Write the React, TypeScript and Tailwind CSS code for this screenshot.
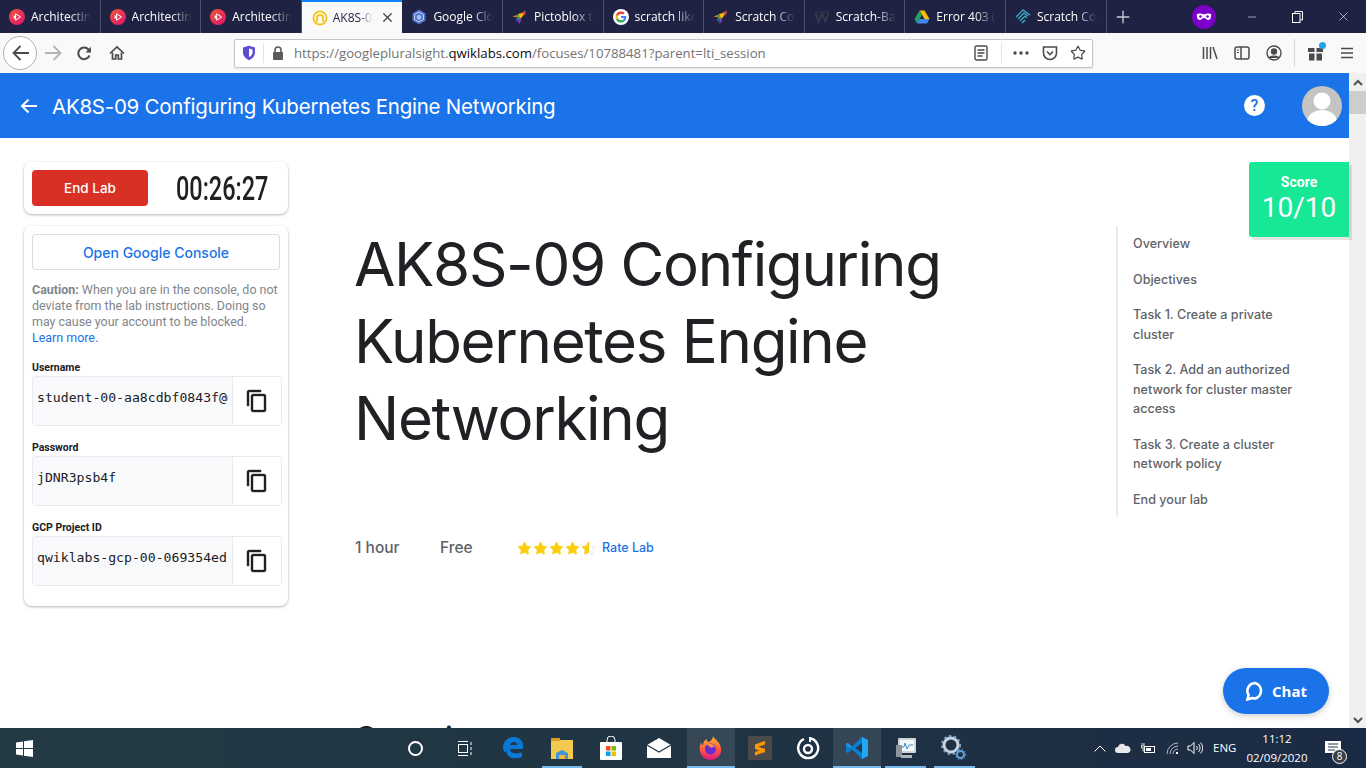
import React from 'react';
import { Star, Plus, X, Minus } from 'lucide-react';

const UI_FONT = 'font-["Open_Sans","Noto_Sans",sans-serif]';
const HEAD_FONT = 'font-["Inter","Noto_Sans",sans-serif]';

const Pluralsight = () => (
  <svg width="16" height="16" viewBox="0 0 16 16">
    <defs>
      <linearGradient id="ps" x1="0" y1="0" x2="1" y2="1">
        <stop offset="0" stopColor="#f0563a" />
        <stop offset="1" stopColor="#e0126e" />
      </linearGradient>
    </defs>
    <circle cx="8" cy="8" r="8" fill="url(#ps)" />
    <path d="M6.600 4.800 11.600 8l-5 3.200z" fill="none" stroke="#fff" strokeWidth="1" />
    <path d="M4.600 6v4L7.400 8z" fill="#fff" />
  </svg>
);

const QwikRing = () => (
  <svg width="16" height="16" viewBox="0 0 16 16" fill="none">
    <circle cx="8" cy="8" r="6.600" stroke="#f5c518" strokeWidth="1.800" />
    <path d="M5 12V8a3 3 0 0 1 6 0v4" stroke="#f5c518" strokeWidth="1.800" />
  </svg>
);

const CloudHex = () => (
  <svg width="16" height="16" viewBox="0 0 16 16">
    <path d="M8 .5 14.600 4.200v7.600L8 15.500 1.400 11.800V4.200z" fill="#4b6fc4" />
    <path d="M8 3 12.400 5.500v5L8 13l-4.400-2.500v-5z" fill="none" stroke="#c6d6f5" strokeWidth="1" />
    <path d="M8 5.500 10.200 7v2.500L8 11 5.800 9.500V7z" fill="#a9c1f0" />
  </svg>
);

const Rocket = () => (
  <svg width="16" height="16" viewBox="0 0 16 16">
    <path d="M10 4 14 1.500 13 6 9 7z" fill="#ea4335" />
    <path d="M10 4 13 1.500 11.500 3 11 6 8 7z" fill="#f28b24" />
    <path d="M6 5 10 4 11 7 8 10z" fill="#fbbc05" />
    <path d="M6 5 8 10 6 10.500 4 7z" fill="#34a853" />
    <path d="M0.500 8 4 6 6 8z" fill="#e8792b" />
    <path d="M6 10.500 9.500 9 8.500 13 6.500 15z" fill="#7b3fb5" />
    <path d="M4 9 6 11 4.500 13z" fill="#3f6fd8" />
  </svg>
);

const GoogleG = () => (
  <svg width="16" height="16" viewBox="0 0 16 16">
    <circle cx="8" cy="8" r="8" fill="#fff" />
    <path d="M13.300 8.100c0-.4 0-.8-.1-1.100H8v2.100h3a2.600 2.600 0 0 1-1.100 1.700l1.800 1.400c1-1 1.600-2.400 1.600-4.100z" fill="#4285f4" />
    <path d="M8 13.500c1.500 0 2.700-.5 3.700-1.300l-1.800-1.400c-.5.3-1.100.5-1.900.5-1.400 0-2.700-1-3.100-2.300L3 10.400a5.500 5.500 0 0 0 5 3.100z" fill="#34a853" />
    <path d="M4.900 9A3.300 3.300 0 0 1 4.900 7L3 5.600a5.500 5.500 0 0 0 0 4.800z" fill="#fbbc05" />
    <path d="M8 4.700c.8 0 1.500.3 2.100.8l1.600-1.600A5.500 5.500 0 0 0 3 5.600L4.900 7C5.300 5.700 6.600 4.700 8 4.700z" fill="#ea4335" />
  </svg>
);

const WMark = () => (
  <svg width="16" height="16" viewBox="0 0 16 16" fill="none" stroke="#3a3d4d" strokeWidth="1.600">
    <path d="M1.500 3.500 4.500 12.500 8 5l3.500 7.500 3-9" />
    <path d="M1 3h14" stroke="#2e3145" />
  </svg>
);

const Drive = () => (
  <svg width="16" height="16" viewBox="0 0 16 16">
    <path d="M5.500 1.500h5L15.500 10h-5z" fill="#fbbc05" />
    <path d="M5.500 1.500 .5 10 3 14.500 8 6z" fill="#1ea362" />
    <path d="M3 14.500h10L15.500 10h-10z" fill="#4285f4" />
  </svg>
);

const WaveMark = () => (
  <svg width="16" height="16" viewBox="0 0 16 16" fill="none" stroke="#3fb6d3" strokeWidth="1.200">
    <path d="M1 8 8 1l7 5" />
    <path d="M3 10l6-6 4 3" />
    <path d="M5 12l5-5 2 2" />
    <path d="M7 14l3-3" />
  </svg>
);

const tabs: { title: string; icon: React.ReactNode; active?: boolean }[] = [
  { title: 'Architecting with', icon: <Pluralsight /> },
  { title: 'Architecting with', icon: <Pluralsight /> },
  { title: 'Architecting with', icon: <Pluralsight /> },
  { title: 'AK8S-09 Conf', icon: <QwikRing />, active: true },
  { title: 'Google Cloud', icon: <CloudHex /> },
  { title: 'Pictoblox tutorial', icon: <Rocket /> },
  { title: 'scratch like pr', icon: <GoogleG /> },
  { title: 'Scratch Coding', icon: <Rocket /> },
  { title: 'Scratch-Based', icon: <WMark /> },
  { title: 'Error 403 (Forb', icon: <Drive /> },
  { title: 'Scratch Coding', icon: <WaveMark /> },
];

const TabBar = () => (
  <div className="flex h-[33px] shrink-0 items-stretch bg-[#1f2243]">
    {tabs.map((t, i) =>
      t.active ? (
        <div key={i} className="flex w-[100.600px] shrink-0 items-center gap-[5px] border-t-2 border-[#0a84ff] bg-[#f9f9fa] pl-[10px] text-[#1f2243]">
          <span className="shrink-0"><QwikRing /></span>
          <span className="w-[44px] overflow-hidden whitespace-nowrap text-[12px] [mask-image:linear-gradient(to_right,black_60%,transparent_90%)]">{t.title}</span>
          <X size={15} strokeWidth={2} className="-ml-[2px] shrink-0 text-[#444]" />
        </div>
      ) : (
        <div key={i} className="flex w-[100.600px] shrink-0 items-center gap-[6px] border-r border-[#4e5170] pl-[9px] pt-[1px] text-white">
          <span className="shrink-0">{t.icon}</span>
          <span className="w-[60px] overflow-hidden whitespace-nowrap text-[12px] [mask-image:linear-gradient(to_right,black_65%,transparent)]">{t.title}</span>
        </div>
      ),
    )}
    <div className="flex w-[34px] items-center justify-center text-[#c9cad3]">
      <Plus size={20} strokeWidth={1.600} />
    </div>
    <div className="ml-[47px] flex w-[34px] items-center justify-center">
      <svg width="24" height="24" viewBox="0 0 24 24">
        <circle cx="12" cy="12" r="12" fill="#7b00c8" />
        <path d="M5 9c2-1 4-.5 7 .5 3-1 5-1.500 7-.5 .5 3-.5 6-2.500 6-2 0-2.500-2-4.500-2s-2.500 2-4.500 2C5.500 15 4.500 12 5 9z" fill="#fff" />
        <circle cx="8.500" cy="11.500" r="1.300" fill="#7b00c8" />
        <circle cx="15.500" cy="11.500" r="1.300" fill="#7b00c8" />
      </svg>
    </div>
    <div className="ml-[8px] flex w-[46px] items-center justify-center text-white"><Minus size={12} strokeWidth={1.200} /></div>
    <div className="flex w-[46px] items-center justify-center text-white">
      <svg width="11" height="12" viewBox="0 0 11 12" fill="none" stroke="#fff">
        <rect x="0.500" y="2.500" width="7.500" height="9" />
        <path d="M3 2.500V.5h7.500v8.500H8" />
      </svg>
    </div>
    <div className="flex w-[46px] items-center justify-center text-white"><X size={15} strokeWidth={1} /></div>
  </div>
);

const NavBar = () => (
  <div className="flex h-10 shrink-0 items-center bg-[#f9f9fa] text-[#4a4a4f]">
    <div className="ml-[3px] flex h-[34px] w-[34px] items-center justify-center rounded-full border border-[#b1b1b3] bg-white">
      <svg width="17" height="16" viewBox="0 0 17 16" fill="none" stroke="#4a4a4f" strokeWidth="1.800">
        <path d="M17 8H1.500M8.500 1 1.500 8l7 7" />
      </svg>
    </div>
    <svg width="17" height="16" viewBox="0 0 17 16" fill="none" stroke="#b4b4b6" strokeWidth="1.800" className="ml-[8px]">
      <path d="M0 8h15.500M8.500 1l7 7-7 7" />
    </svg>
    <svg width="15" height="15" viewBox="0 0 15 15" fill="none" stroke="#4a4a4f" strokeWidth="2" className="ml-[15px]">
      <path d="M12.500 9.500A5.800 5.800 0 1 1 11.500 3.500L13 5" />
      <path d="M14 .8V6.500H8.500z" fill="#4a4a4f" stroke="none" />
    </svg>
    <svg width="16" height="16" viewBox="0 0 16 16" className="ml-[17px]" fill="none" stroke="#4a4a4f" strokeWidth="1.700">
      <path d="M1 8.500 8 2l7 6.500" />
      <path d="M3.500 7.500V14h3.200v-4h2.600v4h3.200V7.500" />
    </svg>
    <div className="ml-[109px] flex h-[29px] w-[859px] items-center rounded-[2px] border border-[#c4c4c6] bg-white shadow-[0_1px_2px_rgba(0,0,0,0.08)]">
      <svg width="14" height="16" viewBox="0 0 14 16" className="ml-[7px]">
        <path d="M7 .8 13 2.500v5c0 3.500-2.500 6-6 7.700C3.500 13.500 1 11 1 7.500v-5z" fill="#5a4fcf" />
        <path d="M7 3.500 10.500 4.500v3c0 2-1.500 3.500-3.500 4.700z" fill="#fff" />
      </svg>
      <div className="ml-[7px] h-[20px] w-px bg-[#e3e3e5]" />
      <svg width="12" height="14" viewBox="0 0 12 14" className="ml-[8px]">
        <path d="M3 6V4a3 3 0 0 1 6 0v2" fill="none" stroke="#5c5c5f" strokeWidth="1.600" />
        <rect x="1" y="6" width="10" height="8" rx="1" fill="#5c5c5f" />
      </svg>
      <span className={`ml-[10px] whitespace-nowrap pt-[1px] text-[13.200px] text-[#737373] ${UI_FONT}`}>
        https://googlepluralsight.<span className="text-[#0c0c0d]">qwiklabs.com</span>/focuses/10788481?parent=lti_session
      </span>
      <div className="flex-1" />
      <svg width="14" height="16" viewBox="0 0 14 16" fill="none" stroke="#4a4a4f" strokeWidth="1.400">
        <rect x="1" y="1" width="12" height="14" rx="1.500" />
        <path d="M3.500 5h7M3.500 8h7M3.500 11h5" />
      </svg>
      <div className="ml-[13px] h-[20px] w-px bg-[#e3e3e5]" />
      <svg width="16" height="4" viewBox="0 0 16 4" fill="#4a4a4f" className="ml-[11px]">
        <circle cx="2" cy="2" r="1.700" />
        <circle cx="8" cy="2" r="1.700" />
        <circle cx="14" cy="2" r="1.700" />
      </svg>
      <svg width="16" height="16" viewBox="0 0 16 16" fill="none" stroke="#4a4a4f" strokeWidth="1.600" className="ml-[13px]">
        <path d="M1.500 2h13v6a6.500 6.500 0 0 1-13 0z" />
        <path d="M5 6.500 8 9.500l3-3" />
      </svg>
      <Star size={16} strokeWidth={1.800} className="ml-[12px] mr-[6px]" />
    </div>
    <svg width="16" height="16" viewBox="0 0 16 16" className="ml-[109px]" fill="none" stroke="#4a4a4f" strokeWidth="1.500">
      <path d="M1.500 2v12M5 2v12M8.500 2v12M11 2l4 12" />
    </svg>
    <svg width="16" height="14" viewBox="0 0 16 14" className="ml-[16px]" fill="none" stroke="#4a4a4f" strokeWidth="1.500">
      <rect x="1" y="1" width="14" height="12" rx="2" />
      <path d="M7 1v12" />
      <path d="M3 4h2M3 6.500h2" strokeWidth="1" />
    </svg>
    <svg width="16" height="16" viewBox="0 0 16 16" className="ml-[16px]" fill="none" stroke="#4a4a4f" strokeWidth="1.400">
      <circle cx="8" cy="8" r="7" />
      <circle cx="8" cy="6.500" r="2.500" fill="#4a4a4f" />
      <path d="M3.500 13c1-2.500 8-2.500 9 0" fill="#4a4a4f" />
    </svg>
    <div className="ml-[12px] h-[28px] w-px bg-[#d7d7db]" />
    <div className="relative ml-[13px]">
      <svg width="15" height="16" viewBox="0 0 15 16" fill="#4a4a4f">
        <rect x="0" y="3" width="6.500" height="4" />
        <rect x="8.500" y="3" width="6.500" height="4" />
        <rect x="1" y="8.500" width="5.500" height="7" />
        <rect x="8.500" y="8.500" width="5.500" height="7" />
      </svg>
      <span className="absolute -top-[3px] -right-[3px] h-[7px] w-[7px] rounded-full bg-[#22a3f0]" />
    </div>
    <svg width="14" height="12" viewBox="0 0 14 12" className="ml-[17px]" stroke="#4a4a4f" strokeWidth="1.700">
      <path d="M1 1.500h12M1 6h12M1 10.500h12" />
    </svg>
  </div>
);

const CopyIcon = () => (
  <svg width="24" height="24" viewBox="0 0 24 24" fill="#202124" stroke="#202124" strokeWidth="0.400" className="-ml-[1px]">
    <path d="M16 1H4c-1.100 0-2 .9-2 2v14h2V3h12V1zm3 4H8c-1.100 0-2 .9-2 2v14c0 1.100.9 2 2 2h11c1.100 0 2-.9 2-2V7c0-1.100-.9-2-2-2zm0 16H8V7h11v14z" />
  </svg>
);

const creds = [
  { label: 'Username', value: 'student-00-aa8cdbf0843f@qwiklabs.net' },
  { label: 'Password', value: 'jDNR3psb4f' },
  { label: 'GCP Project ID', value: 'qwiklabs-gcp-00-069354ed' },
];

const LabPanel = () => (
  <div className="ml-6 mt-6 flex w-[264px] shrink-0 flex-col gap-3">
    <div className="flex h-[52px] items-center rounded-lg bg-white pl-2 shadow-[0_1px_3px_rgba(60,64,67,0.4)]">
      <button className={`h-9 w-[116px] shrink-0 rounded-[4px] bg-[#d93025] text-[13.500px] font-medium text-white ${HEAD_FONT}`}>End Lab</button>
      <span className='ml-[28px] inline-block origin-left scale-x-[0.69] whitespace-nowrap font-["Roboto",sans-serif] text-[34px] font-medium leading-none text-[#202124]'>00:26:27</span>
    </div>
    <div className="h-[380px] rounded-lg bg-white p-2 shadow-[0_1px_3px_rgba(60,64,67,0.4)]">
      <button className={`h-9 w-[248px] rounded-[4px] border border-[#dadce0] bg-white text-[14px] font-medium text-[#1a73e8] ${HEAD_FONT}`}>
        Open Google Console
      </button>
      <p className='mt-[12px] font-["Roboto",sans-serif] text-[12.450px] leading-4 text-[#80868b]'>
        <b className="font-bold">Caution:</b> When you are in the console, do not deviate from the lab instructions. Doing so may cause your account to be blocked.
        <span className="block text-[#1a73e8]">Learn more.</span>
      </p>
      <div className="mt-[14px] flex flex-col gap-[14px]">
        {creds.map(c => (
          <div key={c.label}>
            <div className='font-["Roboto",sans-serif] text-[10.500px] font-bold leading-[16px] text-[#202124]'>{c.label}</div>
            <div className="flex h-[50px] w-[250px] overflow-hidden rounded-[4px] border border-[#e8eaed]">
              <div className='w-[199px] bg-[#f8f9fa] pl-[4px] pt-[13px] font-["DejaVu_Sans_Mono",monospace] text-[13.150px] leading-4 text-[#202124]'>
                <div className="w-[191px] overflow-hidden whitespace-nowrap">{c.value}</div>
              </div>
              <div className="flex flex-1 items-center justify-center border-l border-[#e8eaed]">
                <CopyIcon />
              </div>
            </div>
          </div>
        ))}
      </div>
    </div>
  </div>
);

const StarRow = () => (
  <div className="flex gap-[1px]">
    {[0, 1, 2, 3].map(i => (
      <Star key={i} size={15} fill="#fbce0f" stroke="#fbce0f" strokeWidth={1} />
    ))}
    <span className="relative h-[15px] w-[15px]">
      <Star size={15} fill="none" stroke="#dadce0" strokeWidth={1} />
      <span className="absolute left-0 top-0 h-[15px] w-[7.500px] overflow-hidden">
        <Star size={15} fill="#fbce0f" stroke="#fbce0f" strokeWidth={1} />
      </span>
    </span>
  </div>
);

const tocItems = [
  'Overview',
  'Objectives',
  'Task 1. Create a private cluster',
  'Task 2. Add an authorized network for cluster master access',
  'Task 3. Create a cluster network policy',
  'End your lab',
];

function TaskIcon({ children, bar, active }: { children: React.ReactNode; bar?: boolean; active?: boolean }) {
  return (
    <div className={`relative flex h-10 w-[48.700px] shrink-0 items-center justify-center ${active ? 'bg-white/10' : ''}`}>
      {children}
      {bar && <span className={`absolute bottom-0 h-[2px] bg-[#76b9ed] ${active ? 'inset-x-0' : 'inset-x-[4px]'}`} />}
    </div>
  );
}

const Taskbar = () => (
  <div className="flex h-10 shrink-0 items-center bg-gradient-to-r from-[#233a44] via-[#203443] to-[#1b2a44] text-white">
    <div className="flex w-12 items-center justify-center">
      <svg width="17" height="17" viewBox="0 0 17 17" fill="#fff">
        <path d="M0 2.500 7 1.500v6.500H0zM8 1.300 17 0v8H8zM0 9h7v6.500l-7-1zM8 9h9v8l-9-1.300z" />
      </svg>
    </div>
    <div className="w-[343.500px]" />
    <TaskIcon>
      <span className="h-[15px] w-[15px] rounded-full border-2 border-white" />
    </TaskIcon>
    <TaskIcon>
      <svg width="16" height="17" viewBox="0 0 16 17" fill="none" stroke="#fff">
        <rect x="1.500" y="4.500" width="9" height="8" />
        <path d="M1 1.500h10M1 15.500h10M14 2v3M14 7v3M14 12v3" />
      </svg>
    </TaskIcon>
    <TaskIcon>
      <svg width="22" height="24" viewBox="0 0 22 24">
        <path d="M1 12C1 5 6 1 12 1c6 0 9 4 9 9v3H8c0 4 6 6 12 3v5c-7 3-15 1-16-6-1 2-2 2-3-3zM8 9h7c0-4-6-4-7 0z" fill="#0a78d6" />
      </svg>
    </TaskIcon>
    <TaskIcon bar>
      <svg width="22" height="22" viewBox="0 0 22 22">
        <path d="M0 1h8l1 2h13v19H0z" fill="#f4c94f" />
        <rect x="0" y="1" width="9" height="3" fill="#d89e24" />
        <path d="M5 22v-6l6-3 6 3v6h-3v-3H8v3z" fill="#3f96d8" />
        <rect x="8" y="18" width="6" height="4" fill="#f2b632" />
      </svg>
    </TaskIcon>
    <TaskIcon>
      <svg width="22" height="24" viewBox="0 0 22 24">
        <path d="M7 6V4a4 4 0 0 1 8 0v2" fill="none" stroke="#fff" strokeWidth="1" />
        <rect x="0" y="6" width="22" height="18" rx="1" fill="#fff" />
        <rect x="6" y="10" width="4.500" height="4.500" fill="#f25022" />
        <rect x="11.500" y="10" width="4.500" height="4.500" fill="#7fba00" />
        <rect x="6" y="15.500" width="4.500" height="4.500" fill="#00a4ef" />
        <rect x="11.500" y="15.500" width="4.500" height="4.500" fill="#ffb900" />
      </svg>
    </TaskIcon>
    <TaskIcon>
      <svg width="24" height="20" viewBox="0 0 24 20">
        <path d="M0 7 12 0l12 7v13H0z" fill="#fff" />
        <path d="M0 7l12 7 12-7" fill="none" stroke="#233a44" strokeWidth="1.200" />
      </svg>
    </TaskIcon>
    <div className="ml-[3px]" />
    <TaskIcon bar active>
      <svg width="24" height="24" viewBox="0 0 24 24">
        <defs>
          <linearGradient id="ff" x1="0.500" y1="0" x2="0.500" y2="1">
            <stop offset="0" stopColor="#ffbd30" />
            <stop offset="0.550" stopColor="#ff5a3c" />
            <stop offset="1" stopColor="#e31587" />
          </linearGradient>
        </defs>
        <path d="M14 0c1 3 3 3 6 7 3 5 3 11-1 14-4 4-11 4-15 0C0 17 0 11 2 6c0 2 1 3 2 3 0-3 2-5 4-6-.5 2 .5 3 2 3 2-1 4-3 4-6z" fill="url(#ff)" />
        <circle cx="11.500" cy="13" r="5.500" fill="#6a2bd0" />
        <path d="M8 8.500c3-2 7 0 8 3-2-1-3-.5-4 .5-1-1.500-2.500-2-4-3.500z" fill="#ff9640" />
      </svg>
    </TaskIcon>
    <TaskIcon>
      <span className="flex h-6 w-6 items-center justify-center rounded-[2px] bg-[#4a4a4a]">
        <svg width="12" height="16" viewBox="0 0 12 16" fill="#ff9800">
          <path d="M1 4.500 11 1v3.500L1 8zM1 5.500 11 9v3.500L1 9z" />
          <path d="M1 12 11 8.500V12L1 15.500z" />
        </svg>
      </span>
    </TaskIcon>
    <TaskIcon>
      <svg width="24" height="24" viewBox="0 0 24 24" fill="none" stroke="#fff" strokeWidth="2.400">
        <path d="M15 2.500A10 10 0 1 1 8 3" />
        <circle cx="12" cy="13" r="4" />
        <path d="M14 1v5" strokeWidth="2" />
      </svg>
    </TaskIcon>
    <TaskIcon bar active>
      <svg width="24" height="24" viewBox="0 0 24 24">
        <path d="M17 1 23 4v16l-6 3-10-9.500L2.500 17 1 16V8l1.500-1L7 10.500z" fill="#0b7fcb" />
        <path d="M17 7 10.500 12 17 17z" fill="#233a4e" />
        <path d="M17 1 23 4v16l-6 3z" fill="#22a7f0" />
        <path d="M1 8l1.500-1L7 10.500 5 12z" fill="#1f9ce6" />
      </svg>
    </TaskIcon>
    <TaskIcon bar>
      <svg width="24" height="24" viewBox="0 0 24 24">
        <rect x="4" y="2" width="18" height="15" rx="1" fill="#cfd4d8" />
        <rect x="6" y="4" width="14" height="11" fill="#f4f7f9" />
        <path d="M7 11h3l1-4 2 6 2-4h4" fill="none" stroke="#3b8fd0" strokeWidth="1" />
        <path d="M2 9h6v12H2z" fill="#8e969c" />
        <path d="M7 19h11v3H7z" fill="#aeb5ba" />
      </svg>
    </TaskIcon>
    <TaskIcon bar>
      <svg width="26" height="26" viewBox="0 0 26 26">
        <circle cx="10" cy="10" r="7" fill="none" stroke="#c8d4de" strokeWidth="3" />
        <circle cx="10" cy="10" r="9" fill="none" stroke="#7ea7c9" strokeWidth="2" strokeDasharray="2.500 2.500" />
        <circle cx="19.500" cy="19.500" r="3.500" fill="none" stroke="#6ba2d2" strokeWidth="2" />
        <circle cx="19.500" cy="19.500" r="5" fill="none" stroke="#3f7fb5" strokeWidth="1.500" strokeDasharray="1.500 1.500" />
      </svg>
    </TaskIcon>
    <div className="flex-1" />
    <svg width="12" height="7" viewBox="0 0 12 7" fill="none" stroke="#fff" strokeWidth="1">
      <path d="M.5 6.500 6 1l5.500 5.500" />
    </svg>
    <svg width="16" height="10" viewBox="0 0 16 10" fill="#e6e8ea" className="ml-[9px]">
      <path d="M3 10a3 3 0 0 1 0-6 4 4 0 0 1 7.500-1A3.500 3.500 0 0 1 13 10z" />
    </svg>
    <svg width="14" height="12" viewBox="0 0 14 12" fill="none" stroke="#fff" className="ml-[10px]">
      <rect x="3.500" y="4.500" width="10" height="6" />
      <rect x="5" y="6" width="5" height="3" fill="#fff" stroke="none" />
      <path d="M1 1v3M3 1v3M.5 4h3v2H.5zM2 6v3h2" strokeWidth="0.800" />
    </svg>
    <svg width="14" height="14" viewBox="0 0 14 14" fill="none" stroke="#d5d8da" className="ml-[10px]">
      <path d="M2 13a11 11 0 0 1 11-11M5 13a8 8 0 0 1 8-8M8 13a5 5 0 0 1 5-5" strokeWidth="0.800" />
      <rect x="11" y="11" width="2" height="2" fill="#fff" stroke="none" />
    </svg>
    <svg width="16" height="14" viewBox="0 0 16 14" fill="none" stroke="#fff" className="ml-[8px]">
      <path d="M1 5h2.500L7 1.500v11L3.500 9H1z" />
      <path d="M9.500 5a3 3 0 0 1 0 4M11.500 3a6 6 0 0 1 0 8M13.500 1.500a8 8 0 0 1 0 11" strokeWidth="0.900" />
    </svg>
    <span className={`ml-[10px] w-[23px] text-[11.500px] text-white ${UI_FONT}`}>ENG</span>
    <div className={`ml-[10px] flex w-[62px] flex-col items-center text-[11.500px] leading-[19px] ${UI_FONT}`}>
      <span>11:12</span>
      <span className="whitespace-nowrap">02/09/2020</span>
    </div>
    <div className="relative ml-[17px] mr-[25px]">
      <svg width="16" height="15" viewBox="0 0 16 15" fill="#fff">
        <path d="M0 0h16v12H0z" />
        <path d="M3 3h10M3 6h10M3 9h7" stroke="#233a44" />
      </svg>
      <span className={`absolute -bottom-[8px] -right-[6px] flex h-[15px] w-[15px] items-center justify-center rounded-full border border-white bg-[#3a3f45] text-[10px] ${UI_FONT}`}>8</span>
    </div>
  </div>
);

export default function App() {
  return (
    <div className={`flex h-screen w-[1366px] flex-col overflow-hidden bg-white ${UI_FONT}`}>
      <TabBar />
      <NavBar />
      <div className="relative flex min-h-0 flex-1">
        <div className="relative flex min-w-0 flex-1 flex-col">
          <header className="flex h-[65px] shrink-0 items-center bg-[#1a73e8] text-white">
            <svg width="18" height="16" viewBox="0 0 18 16" fill="none" stroke="#fff" strokeWidth="2" className="ml-[20px]">
              <path d="M17 8H2M8.500 1.500 2 8l6.500 6.500" />
            </svg>
            <h2 className={`ml-[14px] whitespace-nowrap pt-[3px] text-[20.500px] font-normal tracking-[-0.250px] ${HEAD_FONT}`}>AK8S-09 Configuring Kubernetes Engine Networking</h2>
            <div className="flex-1" />
            <span className='flex h-[21px] w-[21px] items-center justify-center rounded-full bg-white font-["Roboto",sans-serif] text-[16px] font-medium text-[#1a73e8]'>?</span>
            <span className="ml-[37px] mr-[7px] flex h-10 w-10 items-center justify-center overflow-hidden rounded-full bg-[#c4c4c4]">
              <svg width="40" height="40" viewBox="0 0 40 40" fill="#fff">
                <circle cx="20" cy="15" r="8.500" />
                <ellipse cx="20" cy="36" rx="15" ry="12" />
              </svg>
            </span>
          </header>
          <main className="flex min-h-0 flex-1 overflow-hidden">
            <LabPanel />
            <div className="ml-[66px] mt-[88px] w-[762px] shrink-0">
              <h1 className={`w-[640px] text-[60px] font-normal leading-[77px] tracking-[-1.300px] text-[#202124] ${HEAD_FONT}`}>
                AK8S-09 Configuring Kubernetes Engine Networking
              </h1>
              <div className={`ml-[1px] mt-[79px] flex h-6 items-center text-[15.500px] font-medium text-[#5f6368] ${HEAD_FONT}`}>
                <span className="w-[85px]">1 hour</span>
                <span className="w-[77px]">Free</span>
                <StarRow />
                <span className="ml-[6px] text-[12.500px] text-[#1a73e8]">Rate Lab</span>
              </div>
              <h2 className={`mt-[155px] text-[32px] font-normal text-[#202124] ${HEAD_FONT}`}>Overview</h2>
            </div>
            <nav className={`mt-[88px] h-[291px] w-[233px] shrink-0 border-l-2 border-[#e8eaed] pl-[15px] pt-[8px] text-[12.600px] font-medium leading-[19.500px] text-[#5f6368] ${HEAD_FONT}`}>
              {tocItems.map(t => (
                <div key={t} className="mb-4 w-[175px]">{t}</div>
              ))}
            </nav>
          </main>
          <div className="absolute right-0 top-[89px] flex h-[75px] w-[100px] flex-col items-center rounded-l-[3px] bg-[#16e896] pt-[11px] text-white shadow-[3px_3px_0_rgba(0,0,0,0.1)]">
            <span className='font-["Roboto",sans-serif] text-[14px] font-bold leading-[18px]'>Score</span>
            <span className='font-["Roboto",sans-serif] text-[28px] font-normal leading-[34px]'>10/10</span>
          </div>
          <div className="absolute bottom-[14px] right-[20px] flex h-[46px] w-[106px] items-center justify-center gap-[7px] rounded-full bg-[#1a73e8] text-[15px] font-bold text-white shadow-[0_2px_6px_rgba(0,0,0,0.2)]">
            <svg width="20" height="20" viewBox="0 0 20 20" fill="none" stroke="#fff" strokeWidth="2.600">
              <path d="M10 2a8 8 0 0 1 0 15.500 9 9 0 0 1-3-.5L2.500 18.500 3.500 14A8 8 0 0 1 10 2z" />
            </svg>
            Chat
          </div>
        </div>
        <div className="flex w-[17px] shrink-0 flex-col items-center bg-[#f0f0f0]">
          <svg width="10" height="16" viewBox="0 0 10 16" fill="none" stroke="#505050" strokeWidth="2" className="mt-[2px]">
            <path d="M1 10l4-4 4 4" />
          </svg>
          <div className="h-[23px] w-full bg-[#cdcdcd]" />
          <div className="flex-1" />
          <svg width="10" height="16" viewBox="0 0 10 16" fill="none" stroke="#505050" strokeWidth="2">
            <path d="M1 6l4 4 4-4" />
          </svg>
        </div>
      </div>
      <Taskbar />
    </div>
  );
}
